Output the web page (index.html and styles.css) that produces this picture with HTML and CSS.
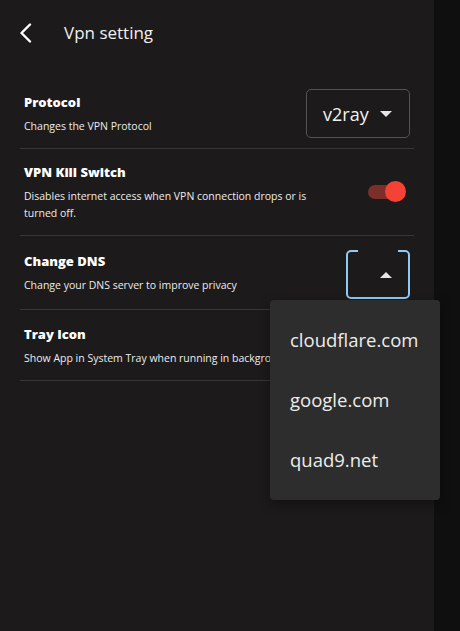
FILE: index.html
```html
<!DOCTYPE html>
<html lang="en">
<head>
  <meta charset="UTF-8">
  <meta name="viewport" content="width=device-width, initial-scale=1.0">
  <title>Vpn setting</title>
  <link rel="stylesheet" href="styles.css">
</head>
<body>
  <div class="app">
    <header class="topbar">
      <button class="back" aria-label="Back">
        <svg width="14" height="20" viewBox="0 0 14 20"><path d="M11 1.5 L2.5 10 L11 18.5" fill="none" stroke="#fff" stroke-width="2.4" stroke-linecap="round" stroke-linejoin="round"/></svg>
      </button>
      <h1>Vpn setting</h1>
    </header>

    <div class="settings">
      <div class="row">
        <div class="info">
          <h3>Protocol</h3>
          <p>Changes the VPN Protocol</p>
        </div>
        <div class="select">
          <span>v2ray</span>
          <span class="caret"></span>
        </div>
      </div>

      <div class="row">
        <div class="info">
          <h3>VPN Kill Switch</h3>
          <p>Disables internet access when VPN connection drops or is turned off.</p>
        </div>
        <div class="switch on"><span class="track"></span><span class="thumb"></span></div>
      </div>

      <div class="row">
        <div class="info">
          <h3>Change DNS</h3>
          <p>Change your DNS server to improve privacy</p>
        </div>
        <div class="select dns open">
          <span class="caret up"></span>
        </div>
      </div>

      <div class="row">
        <div class="info">
          <h3>Tray Icon</h3>
          <p>Show App in System Tray when running in background</p>
        </div>
      </div>
    </div>

    <ul class="menu">
      <li>cloudflare.com</li>
      <li>google.com</li>
      <li>quad9.net</li>
    </ul>
  </div>
</body>
</html>
```

FILE: styles.css
```css
* {
  box-sizing: border-box;
}
body {
  margin: 0;
  background: #100f0f;
  font-family: "Open Sans", "Noto Sans", sans-serif;
  color: #f2f2f2;
  height: 100vh;
  overflow: hidden;
}
.app {
  position: relative;
  width: 434px;
  height: 100vh;
  background: #1c1a1b;
}
.topbar {
  display: flex;
  align-items: center;
  height: 78px;
  padding: 0 0 13px 19px;
}
.back {
  background: none;
  border: none;
  padding: 0;
  display: flex;
  cursor: pointer;
}
.topbar h1 {
  margin: 0 0 0 31px;
  font-size: 17px;
  font-weight: 400;
  color: #f0f0f0;
}
.settings {
  padding: 0 20px;
}
.row {
  display: flex;
  align-items: center;
  justify-content: space-between;
  padding: 10px 4px;
  border-bottom: 1px solid #383636;
  min-height: 71px;
}
.row:first-child {
  min-height: 0;
  padding: 11px 4px 10px;
}
.info {
  padding: 3px 0;
}
.info h3 {
  margin: 0 0 6px;
  font-size: 13px;
  font-weight: 800;
  line-height: 20px;
  color: #fff;
}
.info p {
  margin: 0;
  font-size: 10.5px;
  line-height: 17px;
  color: #ececec;
  max-width: 300px;
}
.select {
  position: relative;
  display: flex;
  align-items: center;
  justify-content: space-between;
  width: 104px;
  height: 49px;
  padding: 0 17px 0 16px;
  border: 1px solid #555353;
  border-radius: 5px;
  font-size: 18px;
}
.caret {
  width: 0;
  height: 0;
  border-left: 6px solid transparent;
  border-right: 6px solid transparent;
  border-top: 6px solid #e6e6e6;
}
.caret.up {
  border-top: none;
  border-bottom: 6px solid #e6e6e6;
}
.select.dns {
  width: 64px;
  justify-content: flex-end;
  padding-right: 16px;
  border: 2px solid #90caf9;
  margin-top: 4px;
}
.select.dns::before {
  content: "";
  position: absolute;
  top: -2px;
  left: 10px;
  width: 40px;
  height: 2px;
  background: #1c1a1b;
}
.switch {
  position: relative;
  width: 38px;
  height: 22px;
  margin-right: 4px;
}
.switch .track {
  position: absolute;
  left: 0;
  top: 4px;
  width: 34px;
  height: 14px;
  border-radius: 7px;
  background: #7c2f2a;
}
.switch .thumb {
  position: absolute;
  right: 0;
  top: 0;
  width: 21px;
  height: 21px;
  border-radius: 50%;
  background: #f44336;
}
.menu {
  position: absolute;
  left: 270px;
  top: 300px;
  width: 170px;
  margin: 0;
  padding: 10px 0;
  list-style: none;
  background: #2e2d2d;
  border-radius: 4px;
  box-shadow: 0 4px 12px rgba(0,0,0,0.35);
}
.menu li {
  height: 60px;
  line-height: 60px;
  padding-left: 20px;
  font-size: 18.5px;
  color: #ececec;
}
```
